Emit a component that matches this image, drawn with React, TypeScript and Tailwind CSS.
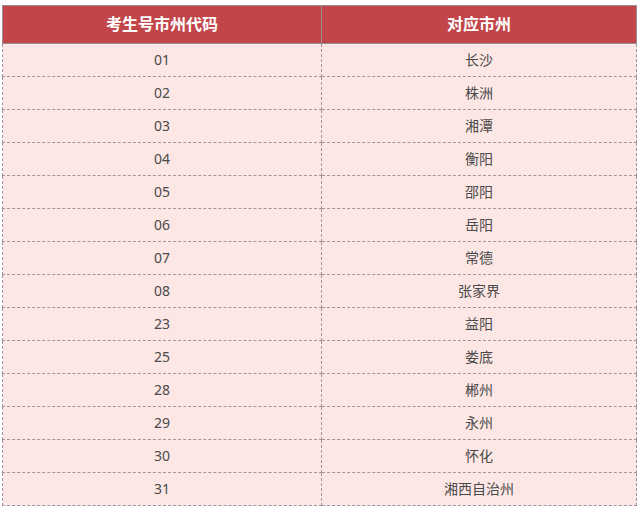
const rows: [string, string][] = [
  ['01', '长沙'],
  ['02', '株洲'],
  ['03', '湘潭'],
  ['04', '衡阳'],
  ['05', '邵阳'],
  ['06', '岳阳'],
  ['07', '常德'],
  ['08', '张家界'],
  ['23', '益阳'],
  ['25', '娄底'],
  ['28', '郴州'],
  ['29', '永州'],
  ['30', '怀化'],
  ['31', '湘西自治州'],
];

export default function App() {
  return (
    <div
      className="w-[641px] h-[511px] bg-white pt-[5px] pl-[2px]"
      style={{ fontFamily: '"Noto Sans", "Noto Sans CJK SC", sans-serif' }}
    >
      <table className="w-[635px] border-collapse table-fixed">
        <thead>
          <tr className="h-[38px] bg-[#c2454a] text-white text-[16px] font-bold">
            <th className="w-[319px] border border-[#9a8f96] font-bold pb-[2px]">考生号市州代码</th>
            <th className="border border-[#9a8f96] font-bold pb-[2px]">对应市州</th>
          </tr>
        </thead>
        <tbody>
          {rows.map(([code, city]) => (
            <tr key={code} className="h-[33px] bg-[#fde7e5] text-[14px] text-[#4a4a4a]">
              <td className="border border-dashed border-[#a3949c] text-center pb-[2px]">{code}</td>
              <td className="border border-dashed border-[#a3949c] text-center pb-[2px]">{city}</td>
            </tr>
          ))}
        </tbody>
      </table>
    </div>
  );
}
